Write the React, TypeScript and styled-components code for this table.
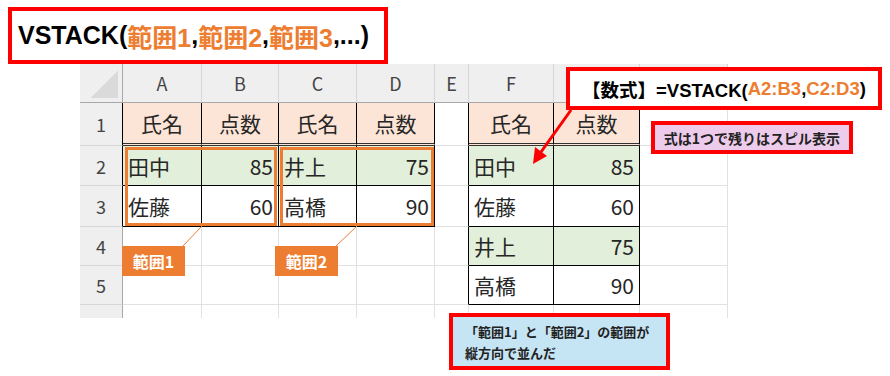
import React from "react";
import styled, {createGlobalStyle} from "styled-components";

const ORANGE = "#ED7D31";
const RED = "#FF0000";

type Fill = "head" | "green" | "none";
type Line = "gray" | "black" | "double";
type Align = "left" | "center" | "right";

// G and H letters sit under the formula box, so they are left blank
const COLS = ["A", "B", "C", "D", "E", "F", "", ""];

const body: (string | null)[][] = [
    ["氏名", "点数", "氏名", "点数", null, "氏名", "点数", null],
    ["田中", "85", "井上", "75", null, "田中", "85", null],
    ["佐藤", "60", "高橋", "90", null, "佐藤", "60", null],
    [null, null, null, null, null, "井上", "75", null],
    [null, null, null, null, null, "高橋", "90", null],
];

// r is 1-based sheet row, c is 0-based column index
const inTable = (r: number, c: number) =>
    (r >= 1 && r <= 3 && c >= 0 && c <= 3) || (r >= 1 && r <= 5 && (c === 5 || c === 6));

const fillOf = (r: number, c: number): Fill => {
    if (!inTable(r, c)) return "none";
    if (r === 1) return "head";
    if (r === 2 || (r === 4 && c >= 5)) return "green";
    return "none";
};

const GlobalStyle = createGlobalStyle`
    * { box-sizing: border-box; }
    body {
        margin: 0;
        background: #fff;
        font-family: "Noto Sans CJK JP", sans-serif;
    }
`;

const App: React.FC = () => {
    return (
        <Canvas>
            <GlobalStyle/>
            <Title>
                VSTACK(<Hi>範囲1</Hi>,<Hi>範囲2</Hi>,<Hi>範囲3</Hi>,...)
            </Title>

            <Sheet>
                <Corner/>
                {COLS.map((col, i) => <ColHead key={i}>{col}</ColHead>)}

                {body.map((row, i) => {
                    const r = i + 1;
                    return (
                        <React.Fragment key={r}>
                            <RowHead $dark={inTable(r, 0)}>{r}</RowHead>
                            {row.map((text, c) => {
                                const numeric = !!text && /^\d+$/.test(text);
                                const align: Align = r === 1 ? "center" : numeric ? "right" : "left";
                                const right: Line = inTable(r, c) || inTable(r, c + 1) ? "black" : "gray";
                                const bottom: Line = inTable(r, c) && r === 1
                                    ? "double"
                                    : inTable(r, c) || inTable(r + 1, c) ? "black" : "gray";
                                return (
                                    <Cell key={c} $fill={fillOf(r, c)} $align={align} $right={right}
                                          $bottom={bottom}>
                                        {text}
                                    </Cell>
                                );
                            })}
                        </React.Fragment>
                    );
                })}

                <RowHead $dark={false} $last/>
                {COLS.map((_, i) => <Cell key={i} $fill="none" $align="left" $right="gray" $bottom="none"/>)}
            </Sheet>

            <RangeBox style={{left: 125, width: 152}}/>
            <RangeBox style={{left: 280, width: 154}}/>
            <Tag style={{left: 122}}>範囲1</Tag>
            <Tag style={{left: 275}}>範囲2</Tag>

            <Drawing width={890} height={376}>
                <line x1={182} y1={247} x2={202} y2={226} stroke={ORANGE} strokeWidth={1}/>
                <line x1={335} y1={247} x2={357} y2={226} stroke={ORANGE} strokeWidth={1}/>
                <line x1={571} y1={110} x2={541} y2={152} stroke={RED} strokeWidth={3}/>
                <polygon points="533,164 535,147 547,156" fill={RED}/>
            </Drawing>

            <FormulaBox>
                【数式】=VSTACK(<Hi>A2:B3</Hi>,<Hi>C2:D3</Hi>)
            </FormulaBox>
            <Note>式は1つで残りはスピル表示</Note>
            <Caption>
                「範囲1」と「範囲2」の範囲が<br/>
                縦方向で並んだ
            </Caption>
        </Canvas>
    );
};

const Canvas = styled.div`
    position: relative;
    width: 890px;
    height: 376px;
    overflow: hidden;
    padding-top: 7px;
`;

const Title = styled.div`
    margin-left: 8px;
    width: 380px;
    height: 57px;
    border: 4px solid ${RED};
    background: #fff;
    display: flex;
    align-items: center;
    padding: 0 6px;
    font-family: "Liberation Sans", "Noto Sans CJK JP", sans-serif;
    font-weight: 700;
    font-size: 25px;
    color: #000;
    white-space: nowrap;
`;

const Hi = styled.span`
    color: ${ORANGE};
`;

const Sheet = styled.div`
    margin-left: 80px;
    display: grid;
    grid-template-columns: 43px 79px 77px 78px 78px 34px 85px 86px 88px;
    grid-template-rows: 39px 43px 40px 41px 39px 39px 13px;
    width: 648px;
`;

const Corner = styled.div`
    background: #efefef linear-gradient(to top left, #dadada 50%, transparent 50%) no-repeat right 4px bottom 4px / 28px 27px;
    border-right: 1px solid #a8a8a8;
    border-bottom: 1px solid #a8a8a8;
`;

const ColHead = styled.div`
    background: #efefef;
    border-right: 1px solid #d6d6d6;
    border-bottom: 1px solid #a8a8a8;
    display: flex;
    align-items: center;
    justify-content: center;
    font-size: 18px;
    color: #444;
`;

const RowHead = styled.div<{ $dark: boolean; $last?: boolean }>`
    background: #efefef;
    border-right: 1px solid ${p => p.$dark ? "#000" : "#a8a8a8"};
    border-bottom: ${p => p.$last ? "none" : "1px solid #d6d6d6"};
    display: flex;
    align-items: center;
    justify-content: center;
    font-size: 18px;
    color: #444;
`;

const fills: Record<Fill, string> = {head: "#FCE4D6", green: "#E2EFDA", none: "#fff"};
const lines: Record<Line | "none", string> = {
    gray: "1px solid #e1e1e1",
    black: "1px solid #000",
    double: "3px double #333",
    none: "none",
};

const Cell = styled.div<{ $fill: Fill; $align: Align; $right: Line; $bottom: Line | "none" }>`
    display: flex;
    align-items: center;
    justify-content: ${p => p.$align === "right" ? "flex-end" : p.$align === "center" ? "center" : "flex-start"};
    padding: 0 5px;
    background: ${p => fills[p.$fill]};
    border-right: ${p => lines[p.$right]};
    border-bottom: ${p => lines[p.$bottom]};
    font-size: 21px;
    color: #262626;
    white-space: nowrap;
`;

const RangeBox = styled.div`
    position: absolute;
    top: 147px;
    height: 79px;
    border: 3px solid ${ORANGE};
`;

const Tag = styled.div`
    position: absolute;
    top: 246px;
    width: 63px;
    height: 30px;
    background: ${ORANGE};
    color: #fff;
    display: flex;
    align-items: center;
    justify-content: center;
    font-weight: 700;
    font-size: 16px;
`;

const Drawing = styled.svg`
    position: absolute;
    left: 0;
    top: 0;
    pointer-events: none;
`;

const FormulaBox = styled.div`
    position: absolute;
    left: 566px;
    top: 67px;
    width: 316px;
    height: 43px;
    border: 4px solid ${RED};
    background: #fff;
    display: flex;
    align-items: center;
    justify-content: center;
    font-family: "Liberation Sans", "Noto Sans CJK JP", sans-serif;
    font-weight: 700;
    font-size: 18.5px;
    color: #000;
    white-space: nowrap;
`;

const Note = styled.div`
    position: absolute;
    left: 651px;
    top: 121px;
    width: 202px;
    height: 33px;
    border: 4px solid ${RED};
    background: #EDCBEB;
    display: flex;
    align-items: center;
    justify-content: center;
    font-weight: 700;
    font-size: 14px;
    color: #222;
`;

const Caption = styled.div`
    position: absolute;
    left: 449px;
    top: 313px;
    width: 221px;
    height: 57px;
    border: 4px solid ${RED};
    background: #C5E4F4;
    padding: 4px 0 0 12px;
    font-weight: 700;
    font-size: 13px;
    line-height: 21px;
    color: #222;
`;

export default App;
